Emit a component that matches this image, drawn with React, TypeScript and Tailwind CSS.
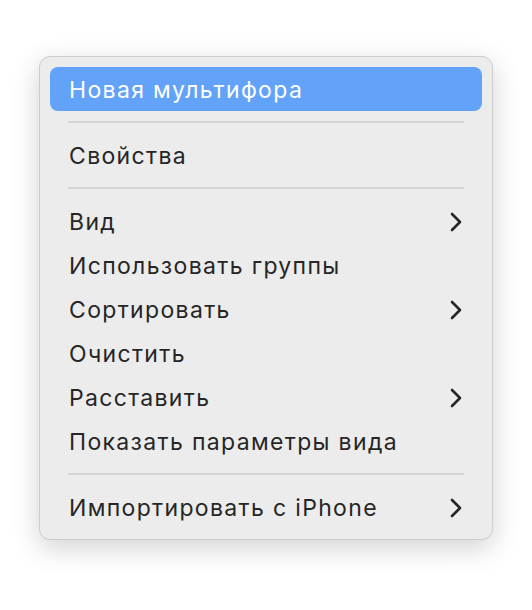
import React from "react";

type Entry =
  | { kind: "item"; label: string; submenu?: boolean; active?: boolean }
  | { kind: "sep" };

const entries: Entry[] = [
  { kind: "item", label: "Новая мультифора", active: true },
  { kind: "sep" },
  { kind: "item", label: "Свойства" },
  { kind: "sep" },
  { kind: "item", label: "Вид", submenu: true },
  { kind: "item", label: "Использовать группы" },
  { kind: "item", label: "Сортировать", submenu: true },
  { kind: "item", label: "Очистить" },
  { kind: "item", label: "Расставить", submenu: true },
  { kind: "item", label: "Показать параметры вида" },
  { kind: "sep" },
  { kind: "item", label: "Импортировать с iPhone", submenu: true },
];

const Chevron = () => (
  <svg width="12" height="20" viewBox="0 0 12 20" fill="none">
    <path
      d="M2 2 L10 10 L2 18"
      stroke="#262626"
      strokeWidth="2.6"
      strokeLinecap="round"
      strokeLinejoin="round"
    />
  </svg>
);

export default function App() {
  return (
    <div className="min-h-[610px] w-[532px] bg-white pl-[39px] pt-[56px] font-['Inter','Liberation_Sans',sans-serif]">
      <div className="flex w-[454px] flex-col rounded-[11px] border border-[#cdcdcd] bg-[#ececec] p-[10px] shadow-[0_8px_28px_rgba(0,0,0,0.18)]">
        {entries.map((e, i) =>
          e.kind === "sep" ? (
            <div key={i} className="flex h-[22px] items-center px-[18px]">
              <div className="h-[2px] w-full bg-[#d4d4d4]" />
            </div>
          ) : (
            <div
              key={i}
              className={
                e.active
                  ? "flex h-[44px] items-center justify-between rounded-[8px] bg-[#62a2f8] pl-[19px] pr-[20px] pt-[2px] text-[23px] tracking-[0.058em] text-white"
                  : "flex h-[44px] items-center justify-between rounded-[8px] pl-[19px] pr-[20px] pt-[2px] text-[23px] tracking-[0.058em] text-[#262626]"
              }
            >
              <span>{e.label}</span>
              {e.submenu && <Chevron />}
            </div>
          )
        )}
      </div>
    </div>
  );
}
